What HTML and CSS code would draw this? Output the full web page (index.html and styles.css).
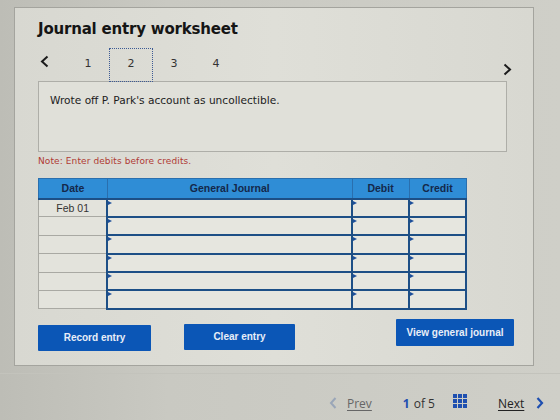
FILE: index.html
```html
<!DOCTYPE html>
<html lang="en">
<head>
    <meta charset="UTF-8">
    <title>Journal entry worksheet</title>
    <link rel="stylesheet" href="styles.css">
</head>
<body>
    <div class="page">
        <div class="panel">
            <h1>Journal entry worksheet</h1>

            <div class="steps">
                <span class="step-arrow">
                    <svg width="9" height="13" viewBox="0 0 9 13"><path d="M7.5 1.5 L2 6.5 L7.5 11.5" fill="none" stroke="#1b1b1b" stroke-width="2"/></svg>
                </span>
                <span class="step">1</span>
                <span class="step active">2</span>
                <span class="step">3</span>
                <span class="step">4</span>
                <span class="step-arrow next">
                    <svg width="9" height="13" viewBox="0 0 9 13"><path d="M1.5 1.5 L7 6.5 L1.5 11.5" fill="none" stroke="#1b1b1b" stroke-width="2"/></svg>
                </span>
            </div>

            <div class="question">Wrote off P. Park's account as uncollectible.</div>

            <p class="note">Note: Enter debits before credits.</p>

            <table class="journal">
                <thead>
                    <tr>
                        <th class="col-date">Date</th>
                        <th class="col-gj">General Journal</th>
                        <th class="col-amt">Debit</th>
                        <th class="col-amt">Credit</th>
                    </tr>
                </thead>
                <tbody>
                    <tr><td class="date">Feb 01</td><td class="cell"></td><td class="cell"></td><td class="cell"></td></tr>
                    <tr><td class="date"></td><td class="cell"></td><td class="cell"></td><td class="cell"></td></tr>
                    <tr><td class="date"></td><td class="cell"></td><td class="cell"></td><td class="cell"></td></tr>
                    <tr><td class="date"></td><td class="cell"></td><td class="cell"></td><td class="cell"></td></tr>
                    <tr><td class="date"></td><td class="cell"></td><td class="cell"></td><td class="cell"></td></tr>
                    <tr><td class="date"></td><td class="cell"></td><td class="cell"></td><td class="cell"></td></tr>
                </tbody>
            </table>

            <div class="actions">
                <button class="btn">Record entry</button>
                <button class="btn">Clear entry</button>
                <button class="btn btn-view">View general journal</button>
            </div>
        </div>
    </div>

    <div class="pager">
        <div class="pager-prev">
            <svg width="8" height="12" viewBox="0 0 8 12"><path d="M6.5 1 L2 6 L6.5 11" fill="none" stroke="#9aa6b8" stroke-width="2"/></svg>
            <span class="link muted">Prev</span>
        </div>
        <div class="pager-count">
            <b>1</b> of 5
            <svg class="grid-icon" width="14" height="14" viewBox="0 0 14 14" fill="#1e4fb0">
                <rect x="0" y="0" width="4" height="4"/><rect x="5" y="0" width="4" height="4"/><rect x="10" y="0" width="4" height="4"/>
                <rect x="0" y="5" width="4" height="4"/><rect x="5" y="5" width="4" height="4"/><rect x="10" y="5" width="4" height="4"/>
                <rect x="0" y="10" width="4" height="4"/><rect x="5" y="10" width="4" height="4"/><rect x="10" y="10" width="4" height="4"/>
            </svg>
        </div>
        <div class="pager-next">
            <span class="link">Next</span>
            <svg width="8" height="12" viewBox="0 0 8 12"><path d="M1.5 1 L6 6 L1.5 11" fill="none" stroke="#1e4fb0" stroke-width="2.2"/></svg>
        </div>
    </div>
</body>
</html>
```

FILE: styles.css
```css
* {
    margin: 0;
    padding: 0;
    box-sizing: border-box;
}

body {
    width: 560px;
    height: 420px;
    overflow: hidden;
    background: linear-gradient(90deg, #bdbdb6 0%, #c9c9c2 30%, #cfcfc8 100%);
    font-family: 'DejaVu Sans', Verdana, sans-serif;
    color: #222;
}

.page {
    padding: 7px 0 0 14px;
    height: 373px;
}

.panel {
    width: 520px;
    height: 359px;
    border: 1px solid #a4a49e;
    background: linear-gradient(90deg, #d8d8d1 0%, #dfdfd8 50%, #d8d8d1 100%);
    padding: 12px 0 0 23px;
}

h1 {
    font-size: 15px;
    font-weight: bold;
    color: #151515;
    letter-spacing: -0.2px;
    height: 24px;
}

/* step tabs */
.steps {
    display: flex;
    align-items: center;
    height: 34px;
    width: 474px;
    margin-top: 4px;
}

.step-arrow {
    display: flex;
    width: 29px;
    padding-left: 2px;
    margin-top: -8px;
}

.step-arrow.next {
    margin-left: auto;
    width: auto;
    margin-top: 8px;
}

.step {
    width: 42px;
    height: 34px;
    display: flex;
    align-items: center;
    justify-content: center;
    font-size: 11px;
    color: #333;
    padding-bottom: 3px;
}

.step.active {
    width: 44px;
    border: 1px dotted #3c5a94;
}

.question {
    width: 469px;
    height: 71px;
    margin-top: -1px;
    border: 1px solid #aeaea8;
    background: #e0e0d9;
    padding: 12px 0 0 11px;
    font-size: 10.6px;
    color: #1c1c1c;
}

.note {
    font-size: 9px;
    color: #b03a34;
    margin-top: 4px;
    height: 22px;
    letter-spacing: 0.1px;
}

/* journal grid */
.journal {
    border-collapse: collapse;
    width: 429px;
    font-family: 'Liberation Sans', Arial, sans-serif;
}

.journal th {
    height: 20px;
    background: #2f8dd6;
    color: #14284a;
    font-size: 10.5px;
    font-weight: bold;
    border: 1px solid #2a6fae;
    border-bottom: 2px solid #1d4f86;
}

.col-date { width: 69px; }
.col-gj { width: 245px; }
.col-amt { width: 57px; }

.journal td {
    height: 18.4px;
}

.journal .date {
    background: #e3e3dc;
    border: 1px solid #a9a9a3;
    border-right: 2px solid #1d4f86;
    text-align: center;
    font-size: 10.5px;
    color: #333;
}

.journal .cell {
    position: relative;
    background: #e6e6df;
    border: 2px solid #1d4f86;
    border-top-width: 1px;
}

/* small marker in the top-left of each input cell */
.journal .cell::before {
    content: '';
    position: absolute;
    left: 0;
    top: 1px;
    border-left: 4px solid #1d4f9a;
    border-top: 2px solid transparent;
    border-bottom: 2px solid transparent;
}

.actions {
    display: flex;
    margin-top: 15px;
    width: 476px;
}

.btn {
    height: 26px;
    width: 113px;
    border: none;
    border-radius: 1px;
    background: #0b56b6;
    color: #e8eef8;
    font-family: 'Liberation Sans', Arial, sans-serif;
    font-size: 10px;
    font-weight: bold;
    margin-right: 33px;
}

.btn:nth-child(2) {
    width: 111px;
    margin-top: -1px;
}

.btn-view {
    width: 118px;
    margin: -6px 0 0 auto;
    height: 27px;
}

/* bottom pager */
.pager {
    display: flex;
    align-items: center;
    height: 47px;
    padding: 12px 0 0 329px;
    border-top: 1px solid #c3c3bc;
    font-family: 'Open Sans', 'DejaVu Sans', sans-serif;
    font-size: 12px;
    color: #333;
}

.pager-prev {
    display: flex;
    align-items: center;
    gap: 10px;
}

.link {
    text-decoration: underline;
    text-decoration-thickness: 1px;
    text-underline-offset: 2px;
}

.link.muted {
    color: #666;
}

.pager-count {
    display: flex;
    align-items: center;
    margin-left: 31px;
    font-size: 12px;
    color: #333;
}

.pager-count b {
    color: #1e4fb0;
    margin-right: 4px;
}

.grid-icon {
    margin-left: 18px;
    margin-top: -4px;
}

.pager-next {
    display: flex;
    align-items: center;
    gap: 12px;
    margin-left: 31px;
    color: #222;
}
```
